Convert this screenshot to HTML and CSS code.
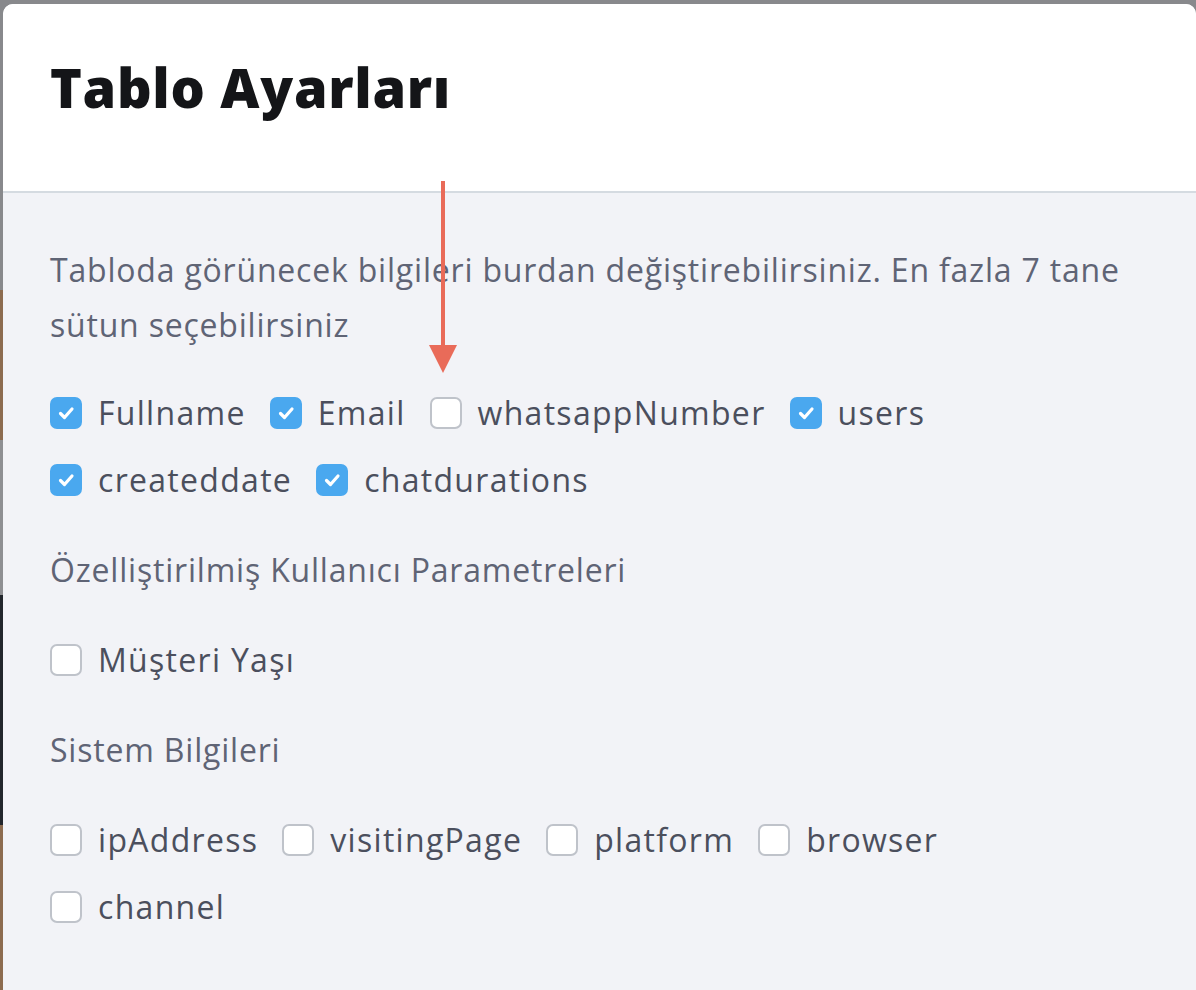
FILE: index.html
```html
<!DOCTYPE html>
<html lang="tr">
<head>
<meta charset="utf-8">
<title>Tablo Ayarları</title>
<link rel="stylesheet" href="styles.css">
</head>
<body>
<div class="modal">
  <div class="modal-header">
    <h1 class="modal-title">Tablo Ayarları</h1>
  </div>
  <div class="modal-body">
    <p class="desc">Tabloda görünecek bilgileri burdan değiştirebilirsiniz. En fazla 7 tane sütun seçebilirsiniz</p>

    <div class="options">
      <label class="option"><span class="box checked"><svg viewBox="0 0 32 32"><path d="M10.5 16.5l4 4 7.5-8.5"/></svg></span><span class="label">Fullname</span></label>
      <label class="option"><span class="box checked"><svg viewBox="0 0 32 32"><path d="M10.5 16.5l4 4 7.5-8.5"/></svg></span><span class="label">Email</span></label>
      <label class="option"><span class="box"></span><span class="label">whatsappNumber</span></label>
      <label class="option"><span class="box checked"><svg viewBox="0 0 32 32"><path d="M10.5 16.5l4 4 7.5-8.5"/></svg></span><span class="label">users</span></label>
      <label class="option"><span class="box checked"><svg viewBox="0 0 32 32"><path d="M10.5 16.5l4 4 7.5-8.5"/></svg></span><span class="label">createddate</span></label>
      <label class="option"><span class="box checked"><svg viewBox="0 0 32 32"><path d="M10.5 16.5l4 4 7.5-8.5"/></svg></span><span class="label">chatdurations</span></label>
    </div>

    <h2 class="section-title">Özelliştirilmiş Kullanıcı Parametreleri</h2>
    <div class="options">
      <label class="option"><span class="box"></span><span class="label">Müşteri Yaşı</span></label>
    </div>

    <h2 class="section-title">Sistem Bilgileri</h2>
    <div class="options">
      <label class="option"><span class="box"></span><span class="label">ipAddress</span></label>
      <label class="option"><span class="box"></span><span class="label">visitingPage</span></label>
      <label class="option"><span class="box"></span><span class="label">platform</span></label>
      <label class="option"><span class="box"></span><span class="label">browser</span></label>
      <label class="option"><span class="box"></span><span class="label">channel</span></label>
    </div>
  </div>

  <svg class="arrow" viewBox="0 0 28 192" width="28" height="192">
    <rect x="12" y="0" width="4" height="168" fill="#e96b59"/>
    <polygon points="0,164 28,164 14,192" fill="#e96b59"/>
  </svg>
</div>
</body>
</html>
```

FILE: styles.css
```css
html, body {
  margin: 0;
  padding: 0;
}

body {
  height: 990px;
  overflow: hidden;
  background:
    linear-gradient(to bottom,
      #88898c 0 290px,
      #8c6b4f 290px 440px,
      #8e8f92 440px 595px,
      #22262c 595px 825px,
      #8c6b4f 825px 990px) left top / 3px 100% no-repeat,
    #88898c;
  font-family: "Open Sans", "DejaVu Sans", sans-serif;
}

.modal {
  position: relative;
  margin: 4px 0 0 3px;
  height: 986px;
  background: #f2f3f7;
  border-radius: 10px 10px 0 0;
  overflow: hidden;
}

.modal-header {
  height: 189px;
  background: #ffffff;
  border-bottom: 2px solid #d5dbe1;
  padding: 46px 0 0 47px;
  box-sizing: border-box;
}

.modal-title {
  margin: 0;
  font-size: 54px;
  line-height: 74px;
  font-weight: 800;
  color: #141518;
  letter-spacing: 0.7px;
}

.modal-body {
  padding: 49px 62px 0 47px;
}

.desc {
  margin: 0;
  font-size: 32px;
  line-height: 55px;
  letter-spacing: 0.8px;
  color: #5f6475;
}

.options {
  display: flex;
  flex-wrap: wrap;
  column-gap: 24px;
  row-gap: 27px;
  margin-top: 41px;
}

.option {
  display: flex;
  align-items: center;
  height: 40px;
  gap: 16px;
}

.box {
  width: 32px;
  height: 32px;
  box-sizing: border-box;
  border-radius: 7px;
  background: #ffffff;
  border: 2px solid #bfc3ca;
  display: flex;
  align-items: center;
  justify-content: center;
  flex: none;
}

.box.checked {
  background: #4aa8ef;
  border-color: #4aa8ef;
}

.box svg {
  width: 32px;
  height: 32px;
  flex: none;
}

.box svg path {
  fill: none;
  stroke: #ffffff;
  stroke-width: 3.2;
  stroke-linecap: round;
  stroke-linejoin: round;
}

.label {
  font-size: 32px;
  letter-spacing: 1.3px;
  color: #4b4f5d;
  line-height: 40px;
}

.section-title {
  margin: 50px 0 0 0;
  font-size: 32px;
  letter-spacing: 0.8px;
  font-weight: 400;
  line-height: 40px;
  color: #5f6475;
}

.section-title + .options {
  margin-top: 50px;
}

.arrow {
  position: absolute;
  left: 426px;
  top: 177px;
}
```
